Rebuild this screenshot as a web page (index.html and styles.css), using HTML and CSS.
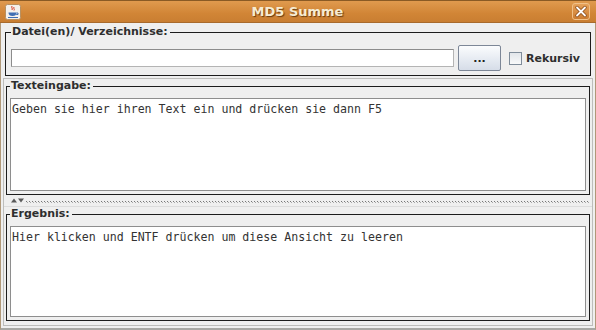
FILE: index.html
```html
<!DOCTYPE html>
<html lang="de">
<head>
    <meta charset="UTF-8">
    <title>MD5 Summe</title>
    <link rel="stylesheet" href="styles.css">
</head>
<body>
    <div class="window">
        <div class="titlebar">
            <span class="app-icon">
                <svg width="16" height="16" viewBox="0 0 16 16">
                    <rect x="0.5" y="0.5" width="15" height="15" rx="2" fill="#f4f1ec" stroke="#b89060"/>
                    <path d="M7 2c-1 1.5 1 2.5 0 4M9 3c-1 1.5 1 2 0 3.5" stroke="#d8402a" stroke-width="1" fill="none"/>
                    <path d="M3.5 8.5h8c0 2.5-1.5 3.5-4 3.5s-4-1-4-3.5z" fill="#3f6fb4"/>
                    <path d="M11.5 9h1.5v1.5h-1.8" stroke="#3f6fb4" fill="none"/>
                    <path d="M3 13.5h10" stroke="#3f6fb4" stroke-width="1"/>
                </svg>
            </span>
            <span class="title">MD5 Summe</span>
            <span class="close">
                <svg width="18" height="17" viewBox="0 0 18 17">
                    <path d="M5 4.5l8 8M13 4.5l-8 8" stroke="#8a4a18" stroke-width="3.4" stroke-linecap="round"/>
                    <path d="M5 4.5l8 8M13 4.5l-8 8" stroke="#fff" stroke-width="1.8" stroke-linecap="round"/>
                </svg>
            </span>
        </div>
        <div class="content">
            <fieldset class="group files">
                <legend>Datei(en)/ Verzeichnisse:</legend>
                <div class="file-row">
                    <div class="path"></div>
                    <div class="browse">...</div>
                    <div class="check"><span class="box"></span>Rekursiv</div>
                </div>
            </fieldset>
            <div class="split">
                <fieldset class="group pane-top">
                    <legend>Texteingabe:</legend>
                    <div class="area">Geben sie hier ihren Text ein und drücken sie dann F5</div>
                </fieldset>
                <div class="divider">
                    <span class="arrows">
                        <svg width="13" height="5" viewBox="0 0 13 5">
                            <path d="M0 4.5l3-4 3 4z" fill="#5a5a5a"/>
                            <path d="M7 0.5h6l-3 4z" fill="#5a5a5a"/>
                        </svg>
                    </span>
                    <span class="dots"></span>
                </div>
                <fieldset class="group pane-bottom">
                    <legend>Ergebnis:</legend>
                    <div class="area">Hier klicken und ENTF drücken um diese Ansicht zu leeren</div>
                </fieldset>
            </div>
        </div>
    </div>
</body>
</html>
```

FILE: styles.css
```css
body {
    margin: 0;
    font-family: "DejaVu Sans", sans-serif;
    background: #efefef;
}

.window {
    width: 596px;
    height: 330px;
    box-sizing: border-box;
    background: #efefef;
    border-left: 1px solid #b09878;
    border-right: 1px solid #b09878;
    border-bottom: 2px solid #a8a8a4;
    display: flex;
    flex-direction: column;
}

/* Title bar */
.titlebar {
    height: 23px;
    flex: none;
    margin: 0 -1px;
    box-sizing: border-box;
    border-top: 1px solid #8a5a24;
    border-bottom: 1px solid #a86a2c;
    background: linear-gradient(#e09a4e, #d18536 60%, #c97e32);
    display: grid;
    grid-template-columns: 1fr auto 1fr;
    align-items: center;
    padding: 0 6px 0 5px;
}

.app-icon {
    display: flex;
}

.app-icon svg {
    display: block;
}

.title {
    font-size: 13px;
    font-weight: bold;
    color: #f6ecd2;
    text-shadow: 1px 1px 1px #6a3c10;
}

.close {
    justify-self: end;
    width: 18px;
    height: 17px;
    box-sizing: border-box;
    border: 1px solid #f0c088;
    border-radius: 3px;
    background: linear-gradient(#e6a25a, #cc7c30);
    display: flex;
    align-items: center;
    justify-content: center;
}

.close svg {
    margin: -1px;
}

/* Content */
.content {
    flex: 1;
    padding: 2px 4px 0 4px;
    display: flex;
    flex-direction: column;
}

.group {
    margin: 0;
    border: 1px solid #1c1c1c;
    padding: 0 3px 3px 3px;
    min-width: 0;
}

.group legend {
    font-size: 11px;
    font-weight: bold;
    line-height: 14px;
    color: #2e2e2e;
    padding: 0 2px 0 1px;
    margin-left: 0;
}

.files {
    padding: 6px 5px 4px 5px;
}

.file-row {
    display: flex;
    align-items: center;
    height: 26px;
}

.path {
    width: 443px;
    height: 18px;
    box-sizing: border-box;
    background: #fff;
    border: 1px solid #8c8c8c;
    border-right-color: #b4b4b4;
    border-bottom-color: #b4b4b4;
}

.browse {
    width: 43px;
    height: 26px;
    box-sizing: border-box;
    margin-left: 4px;
    border: 1px solid #7d8797;
    border-radius: 2px;
    background: linear-gradient(#fbfcfd, #e6ebf2 55%, #d6dde8);
    font-size: 11px;
    font-weight: bold;
    color: #222;
    display: flex;
    align-items: center;
    justify-content: center;
}

.check {
    margin-left: 8px;
    display: flex;
    align-items: center;
    gap: 4px;
    font-size: 11px;
    font-weight: bold;
    color: #2e2e2e;
}

.box {
    width: 13px;
    height: 13px;
    box-sizing: border-box;
    border: 1px solid #7f8c9a;
    background: linear-gradient(#e2e6ea, #f8f9fa);
}

/* Split pane */
.split {
    margin: 2px -2px 0 -2px;
    height: 248px;
    box-sizing: border-box;
    border: 1px solid #bdbdbb;
    padding: 0 2px 3px 2px;
    display: flex;
    flex-direction: column;
}

.area {
    background: #fff;
    border: 1px solid #8e8e8e;
    font-family: "DejaVu Sans Mono", monospace;
    font-size: 11.6px;
    line-height: 14px;
    color: #333;
    padding: 3px 1px;
    box-sizing: border-box;
}

.pane-top {
    padding-top: 5px;
}

.pane-top .area {
    height: 93px;
}

.pane-bottom {
    padding-top: 5px;
}

.pane-bottom .area {
    height: 91px;
}

.divider {
    height: 12px;
    flex: none;
    margin: 0 -2px;
    display: flex;
    align-items: center;
    padding-left: 3px;
    border-bottom: 1px solid #dcdcdc;
    box-sizing: border-box;
}

.arrows {
    display: flex;
    padding-left: 4px;
    margin-bottom: 1px;
}

.dots {
    flex: 1;
    height: 2px;
    margin: 3px 2px 0 2px;
    background:
        repeating-linear-gradient(90deg, #777 0 1px, transparent 1px 3px) 0 0 / 100% 1px no-repeat,
        repeating-linear-gradient(90deg, transparent 0 1px, #a8a8a8 1px 2px, transparent 2px 3px) 0 1px / 100% 1px no-repeat;
}
```
